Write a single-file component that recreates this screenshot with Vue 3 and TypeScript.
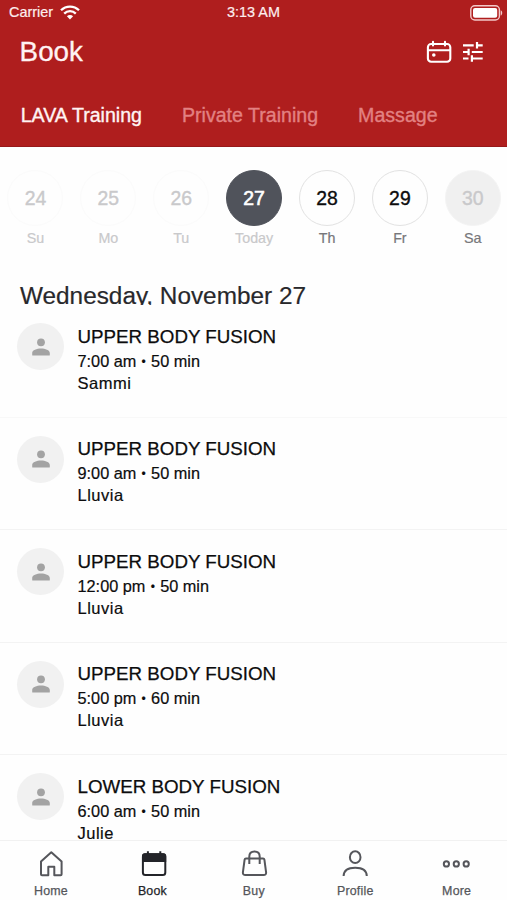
<script setup lang="ts">
interface Day {
  num: number
  label: string
  state: 'past' | 'today' | 'open' | 'closed'
}
interface Session {
  title: string
  start: string
  length: string
  coach: string
}

const categories: string[] = ['LAVA Training', 'Private Training', 'Massage']

const days: Day[] = [
  { num: 24, label: 'Su', state: 'past' },
  { num: 25, label: 'Mo', state: 'past' },
  { num: 26, label: 'Tu', state: 'past' },
  { num: 27, label: 'Today', state: 'today' },
  { num: 28, label: 'Th', state: 'open' },
  { num: 29, label: 'Fr', state: 'open' },
  { num: 30, label: 'Sa', state: 'closed' },
]

const sessions: Session[] = [
  { title: 'UPPER BODY FUSION', start: '7:00 am', length: '50 min', coach: 'Sammi' },
  { title: 'UPPER BODY FUSION', start: '9:00 am', length: '50 min', coach: 'Lluvia' },
  { title: 'UPPER BODY FUSION', start: '12:00 pm', length: '50 min', coach: 'Lluvia' },
  { title: 'UPPER BODY FUSION', start: '5:00 pm', length: '60 min', coach: 'Lluvia' },
  { title: 'LOWER BODY FUSION', start: '6:00 am', length: '50 min', coach: 'Julie' },
]

const tabs: string[] = ['Home', 'Book', 'Buy', 'Profile', 'More']
</script>

<template>
  <div class="screen">
    <header class="header">
      <div class="status">
        <div class="carrier">
          <span>Carrier</span>
          <svg class="wifi" width="20" height="15" viewBox="0 0 20 15">
            <g fill="none" stroke="#fff" stroke-width="2.3">
              <path d="M1 5.3a12.8 12.8 0 0 1 18 0" />
              <path d="M4.2 8.6a8.2 8.2 0 0 1 11.6 0" />
            </g>
            <path d="M6.9 11.2a4.4 4.4 0 0 1 6.2 0L10 14.4z" fill="#fff" />
          </svg>
        </div>
        <span class="clock">3:13 AM</span>
        <svg class="battery" width="33" height="16" viewBox="0 0 33 16">
          <rect x=".8" y=".8" width="28.6" height="14.2" rx="4" fill="none" stroke="#f3c9c9" stroke-width="1.4" />
          <rect x="3" y="3" width="24.2" height="9.8" rx="2" fill="#fff" />
          <path d="M30.7 5.2c2 .7 2 4.7 0 5.4z" fill="#f3c9c9" />
        </svg>
      </div>
      <div class="titlebar">
        <h1>Book</h1>
        <div class="actions">
          <svg width="26" height="24" viewBox="0 0 26 24" fill="none" stroke="#fff" stroke-width="2.1" stroke-linecap="round">
            <rect x="1.9" y="4" width="22.4" height="17.7" rx="3.2" />
            <path d="M2 10.2h22M7 1.8v3.6M19 1.8v3.6" />
            <circle cx="7.8" cy="15" r="1.8" fill="#fff" stroke="none" />
          </svg>
          <svg width="20" height="20" viewBox="0 0 20 20" fill="none" stroke="#fff" stroke-width="2.2">
            <path d="M0 3.3h10.7M14 3.3h5.7M14 .1v6.400M0 10h5.400M8.800 10h10.900M5.600 6.800v6.400M0 16.500h5.500M8.900 16.500h10.800M8.900 13.200v6.500" />
          </svg>
        </div>
      </div>
      <nav class="categories">
        <span v-for="(c, i) in categories" :key="c" :class="{ active: i === 0 }">{{ c }}</span>
      </nav>
    </header>

    <section class="week">
      <div v-for="d in days" :key="d.num" class="day" :class="d.state">
        <div class="num">{{ d.num }}</div>
        <div class="label">{{ d.label }}</div>
      </div>
    </section>

    <h2 class="date">Wednesday, November 27</h2>

    <main class="list">
      <article v-for="(s, i) in sessions" :key="i" class="row">
        <div class="avatar">
          <svg width="18" height="18" viewBox="0 0 18 18" fill="#a3a3a3">
            <circle cx="9" cy="4.3" r="3.9" />
            <path d="M.2 16.9v-1.800c0-3 4.600-4.600 8.800-4.600s8.800 1.600 8.800 4.600v1.800q0 .5-.5.5H.7q-.5 0-.5-.5z" />
          </svg>
        </div>
        <div class="info">
          <div class="name">{{ s.title }}</div>
          <div class="time">{{ s.start }} <span class="dot">•</span> {{ s.length }}</div>
          <div class="coach">{{ s.coach }}</div>
        </div>
      </article>
    </main>

    <footer class="tabbar">
      <div v-for="t in tabs" :key="t" class="tab" :class="{ current: t === 'Book' }">
        <svg width="30" height="30" viewBox="0 0 30 30" fill="none" stroke="#55565b" stroke-width="2" stroke-linejoin="round">
          <path v-if="t === 'Home'" d="M15.300 3.200 5 12.500v12.700q0 1 1 1h6.300v-8.400h6v8.400h6.300q1 0 1-1V12.500z" />
          <template v-else-if="t === 'Book'">
            <rect x="5.900" y="5.300" width="22.400" height="20.700" rx="2.500" stroke="#232429" />
            <path d="M5 12.900V7q0-2.700 2.700-2.700h18.800q2.700 0 2.700 2.700v5.900z" fill="#232429" stroke="none" />
            <path d="M10.900 2.300v4M23.300 2.300v4" stroke="#232429" />
          </template>
          <template v-else-if="t === 'Buy'">
            <path d="M7 9.400h17q1.200 0 1.400 1.200l1.700 12.700q.2 2.800-2.600 2.800h-18q-2.800 0-2.600-2.800l1.700-12.700q.2-1.200 1.400-1.200z" />
            <path d="M10.300 15V7.400q0-5 5.200-5t5.200 5V15" />
          </template>
          <template v-else-if="t === 'Profile'">
            <ellipse cx="15.200" cy="8.200" rx="5.300" ry="5.900" />
            <path d="M3.600 27c.2-5.500 5-8.200 11.600-8.200S26.600 21.500 26.800 27" />
          </template>
          <template v-else>
            <circle cx="5.400" cy="14.900" r="2.600" />
            <circle cx="15.300" cy="14.900" r="2.600" />
            <circle cx="25.200" cy="14.900" r="2.600" />
          </template>
        </svg>
        <span>{{ t }}</span>
      </div>
    </footer>
  </div>
</template>

<style>
body {
  margin: 0;
  overflow: hidden;
}
</style>

<style scoped>
.screen {
  width: 507px;
  height: 900px;
  display: flex;
  flex-direction: column;
  overflow: hidden;
  background: #fefefe;
  color: #0c0c0d;
  font-family: "Liberation Sans", Arial, sans-serif;
}
.header {
  flex: none;
  box-sizing: border-box;
  height: 147px;
  background: #af1e1e;
  border-bottom: 1px solid #97191b;
  color: #fff;
}
.status {
  display: grid;
  grid-template-columns: 1fr auto 1fr;
  height: 25px;
  padding: 0 4px 0 9px;
  font-size: 14.4px;
  line-height: 25px;
  color: #fdeeee;
  -webkit-text-stroke: .2px;
}
.carrier {
  display: flex;
  gap: 7px;
}
.wifi {
  margin-top: 5px;
}
.clock {
  padding-right: 5px;
  line-height: 24px;
}
.battery {
  justify-self: end;
  margin-top: 5px;
}
.titlebar {
  display: flex;
  justify-content: space-between;
  height: 54px;
  padding: 0 24px 0 19.6px;
}
h1 {
  margin: 0;
  font-size: 27.8px;
  font-weight: 400;
  line-height: 53px;
  color: #fff3f3;
  -webkit-text-stroke: .3px;
}
.actions {
  display: flex;
  align-items: center;
  gap: 11px;
}
.categories {
  display: flex;
  gap: 40px;
  padding-left: 20.7px;
  font-size: 19.6px;
  line-height: 73px;
  color: #e28182;
}
.categories .active {
  color: #fff3f3;
}
.categories span {
  -webkit-text-stroke: .35px;
}
.week {
  flex: none;
  box-sizing: border-box;
  display: flex;
  height: 130px;
  padding-top: 23px;
}
.day {
  width: 72.9px;
  flex: none;
  display: flex;
  flex-direction: column;
  align-items: center;
  gap: 3px;
  color: #c9c9cb;
}
.day:first-child {
  margin-left: -1px;
}
.num {
  box-sizing: border-box;
  width: 56px;
  height: 56px;
  border: 1px solid #fbfbfb;
  border-radius: 50%;
  font-size: 19.4px;
  line-height: 54.5px;
  text-align: center;
  -webkit-text-stroke: .35px;
}
.label {
  font-size: 14.3px;
  line-height: 19px;
  -webkit-text-stroke: .2px;
}
.today .num {
  background: #50535b;
  border-color: #50535b;
  color: #fff;
  -webkit-text-stroke: .6px;
}
.open .num {
  border-color: #e2e2e2;
  color: #0c0c0d;
}
.open .label,
.closed .label {
  color: #77777a;
}
.closed .num {
  background: #f0f0f0;
  border-color: #f4f4f4;
}
.date {
  flex: none;
  height: 28.4px;
  margin: 0;
  padding-left: 20px;
  overflow: hidden;
  font-size: 24.35px;
  font-weight: 400;
  line-height: 38px;
  color: #28282b;
  -webkit-text-stroke: .2px;
}
.list {
  flex: 1;
  min-height: 0;
  overflow: hidden;
}
.row {
  box-sizing: border-box;
  display: flex;
  gap: 13.5px;
  height: 112.5px;
  padding: 18px 0 0 17px;
  border-bottom: 1px solid #f3f3f3;
}
.row:first-child {
  border-bottom-color: #f8f8f8;
}
.avatar {
  display: flex;
  align-items: center;
  justify-content: center;
  width: 47px;
  height: 47px;
  border-radius: 50%;
  background: #f1f1f1;
}
.info {
  padding-top: .4px;
  line-height: 22px;
}
.name {
  height: 25px;
  margin-bottom: 1px;
  font-size: 18.75px;
  line-height: 25px;
  -webkit-text-stroke: .25px;
}
.time {
  font-size: 16.3px;
  -webkit-text-stroke: .2px;
}
.dot {
  display: inline-block;
  width: 5.7px;
  font-size: 12px;
  line-height: 1;
  text-align: center;
  vertical-align: 1px;
}
.coach {
  font-size: 16.5px;
  letter-spacing: .5px;
  -webkit-text-stroke: .2px;
}
.tabbar {
  flex: none;
  box-sizing: border-box;
  display: flex;
  height: 60px;
  border-top: 1px solid #f1f1f1;
  background: #fefefe;
}
.tab {
  flex: 1;
  display: flex;
  flex-direction: column;
  align-items: center;
  padding-top: 8px;
  color: #55565b;
  font-size: 12.4px;
  line-height: 16px;
  letter-spacing: .2px;
}
.tab span {
  margin-top: 4px;
  padding-left: .6px;
  -webkit-text-stroke: .25px;
}
.tab.current {
  color: #232429;
}
</style>
